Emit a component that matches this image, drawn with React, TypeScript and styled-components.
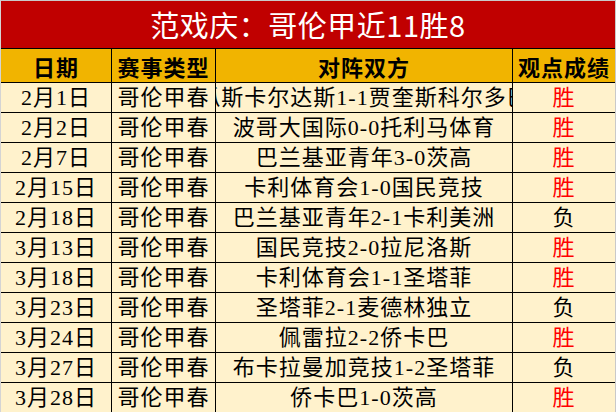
import React from 'react';
import styled, { createGlobalStyle } from 'styled-components';

const GlobalStyle = createGlobalStyle`
  html, body {
    margin: 0;
    padding: 0;
    background: #ffffff;
    overflow: hidden;
  }
`;

interface Match {
  date: string;
  league: string;
  fixture: string;
  result: '胜' | '负';
}

const matches: Match[] = [
  { date: '2月1日', league: '哥伦甲春', fixture: '瓜斯卡尔达斯1-1贾奎斯科尔多巴', result: '胜' },
  { date: '2月2日', league: '哥伦甲春', fixture: '波哥大国际0-0托利马体育', result: '胜' },
  { date: '2月7日', league: '哥伦甲春', fixture: '巴兰基亚青年3-0茨高', result: '胜' },
  { date: '2月15日', league: '哥伦甲春', fixture: '卡利体育会1-0国民竞技', result: '胜' },
  { date: '2月18日', league: '哥伦甲春', fixture: '巴兰基亚青年2-1卡利美洲', result: '负' },
  { date: '3月13日', league: '哥伦甲春', fixture: '国民竞技2-0拉尼洛斯', result: '胜' },
  { date: '3月18日', league: '哥伦甲春', fixture: '卡利体育会1-1圣塔菲', result: '胜' },
  { date: '3月23日', league: '哥伦甲春', fixture: '圣塔菲2-1麦德林独立', result: '负' },
  { date: '3月24日', league: '哥伦甲春', fixture: '佩雷拉2-2侨卡巴', result: '胜' },
  { date: '3月27日', league: '哥伦甲春', fixture: '布卡拉曼加竞技1-2圣塔菲', result: '负' },
  { date: '3月28日', league: '哥伦甲春', fixture: '侨卡巴1-0茨高', result: '胜' },
];

const Sheet = styled.div`
  width: 616px;
  box-sizing: border-box;
  border-top: 1px solid #c9c9c9;
  border-left: 1px solid #d4d4d4;
  border-right: 1px solid #c9c9c9;
  font-family: "Liberation Serif", "Noto Sans CJK SC", serif;
`;

const Title = styled.div`
  height: 47px;
  background: #c00000;
  color: #ffffff;
  font-family: "Noto Sans CJK SC", sans-serif;
  font-size: 29px;
  line-height: 47px;
  text-align: center;
  letter-spacing: 0.5px;
`;

const Row = styled.div<{ $head?: boolean }>`
  display: grid;
  grid-template-columns: 111px 104px 297px 1fr;
  height: ${(p) => (p.$head ? '34px' : '30px')};
  box-sizing: border-box;
  border-top: 1px solid #000000;
  background: ${(p) => (p.$head ? '#f1b400' : '#fff2cc')};
`;

const Cell = styled.div<{ $head?: boolean; $red?: boolean; $last?: boolean }>`
  display: flex;
  align-items: center;
  justify-content: center;
  overflow: hidden;
  white-space: nowrap;
  border-right: ${(p) => (p.$last ? 'none' : '1px solid #000000')};
  color: ${(p) => (p.$red ? '#ff0000' : '#000000')};
  font-size: 22px;
  font-weight: ${(p) => (p.$head ? 700 : 400)};
  font-family: ${(p) =>
    p.$head ? '"Noto Sans CJK SC", sans-serif' : '"Liberation Serif", "Noto Sans CJK SC", serif'};
  letter-spacing: 1px;
  line-height: 1;
`;

const App: React.FC = () => {
  return (
    <>
      <GlobalStyle />
      <Sheet>
        <Title>范戏庆：哥伦甲近11胜8</Title>
        <Row $head>
          <Cell $head>日期</Cell>
          <Cell $head>赛事类型</Cell>
          <Cell $head>对阵双方</Cell>
          <Cell $head $last>观点成绩</Cell>
        </Row>
        {matches.map((m) => (
          <Row key={m.date}>
            <Cell>{m.date}</Cell>
            <Cell>{m.league}</Cell>
            <Cell>{m.fixture}</Cell>
            <Cell $last $red={m.result === '胜'}>
              {m.result}
            </Cell>
          </Row>
        ))}
      </Sheet>
    </>
  );
};

export default App;
